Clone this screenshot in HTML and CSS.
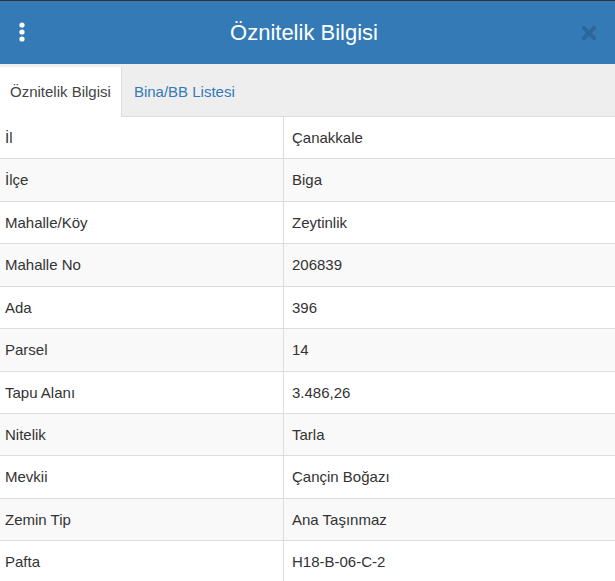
FILE: index.html
```html
<!DOCTYPE html>
<html lang="tr">
<head>
    <meta charset="UTF-8">
    <meta name="viewport" content="width=device-width, initial-scale=1.0">
    <title>Öznitelik Bilgisi</title>
    <link rel="stylesheet" href="styles.css">
</head>
<body>
    <div class="panel">
        <div class="panel-header">
            <span class="menu-btn">
                <svg width="8" height="20" viewBox="0 0 8 20">
                    <circle cx="4" cy="3" r="2.6" fill="#fff"/>
                    <circle cx="4" cy="10" r="2.6" fill="#fff"/>
                    <circle cx="4" cy="17" r="2.6" fill="#fff"/>
                </svg>
            </span>
            <h1 class="panel-title">Öznitelik Bilgisi</h1>
            <span class="close-btn">
                <svg width="14" height="14" viewBox="0 0 14 14">
                    <path d="M2 2 L12 12 M12 2 L2 12" stroke="#2b679e" stroke-width="4" stroke-linecap="round"/>
                </svg>
            </span>
        </div>

        <ul class="nav-tabs">
            <li class="tab active"><a href="#oznitelik">Öznitelik Bilgisi</a></li>
            <li class="tab"><a href="#bina">Bina/BB Listesi</a></li>
        </ul>

        <table class="info-table">
            <tbody>
                <tr><td>İl</td><td>Çanakkale</td></tr>
                <tr><td>İlçe</td><td>Biga</td></tr>
                <tr><td>Mahalle/Köy</td><td>Zeytinlik</td></tr>
                <tr><td>Mahalle No</td><td>206839</td></tr>
                <tr><td>Ada</td><td>396</td></tr>
                <tr><td>Parsel</td><td>14</td></tr>
                <tr><td>Tapu Alanı</td><td>3.486,26</td></tr>
                <tr><td>Nitelik</td><td>Tarla</td></tr>
                <tr><td>Mevkii</td><td>Çançin Boğazı</td></tr>
                <tr><td>Zemin Tip</td><td>Ana Taşınmaz</td></tr>
                <tr><td>Pafta</td><td>H18-B-06-C-2</td></tr>
            </tbody>
        </table>
    </div>
</body>
</html>
```

FILE: styles.css
```css
body,
html {
    margin: 0;
    padding: 0;
    font-family: "Liberation Sans", Arial, sans-serif;
    font-size: 15px;
    color: #333;
    background-color: white;
}

.panel {
    border-top: 1px solid #333;
}

.panel-header {
    height: 63px;
    background-color: #337ab7;
    display: flex;
    align-items: center;
    justify-content: space-between;
    padding: 0 18px 0 18px;
}

.menu-btn {
    width: 8px;
    display: flex;
    margin-top: -2px;
}

.panel-title {
    margin: 0;
    font-size: 22px;
    font-weight: normal;
    color: white;
}

.close-btn {
    display: flex;
    margin-right: 1px;
}

.nav-tabs {
    list-style: none;
    margin: 0;
    padding: 3px 0 0 0;
    display: flex;
    background-color: #eee;
    border-bottom: 1px solid #ddd;
}

.tab {
    margin-right: 2px;
    margin-bottom: -1px;
}

.tab a {
    display: block;
    padding: 14px 10px 15px 10px;
    line-height: 21px;
    text-decoration: none;
    color: #337ab7;
    border-right: 1px solid transparent;
}

.tab.active a {
    background-color: white;
    color: #444;
    border-right: 1px solid #ddd;
}

.info-table {
    width: 100%;
    border-collapse: collapse;
}

.info-table td {
    padding: 10px 5px;
    line-height: 1.42857;
    border-top: 1px solid #ddd;
    vertical-align: top;
}

.info-table td:first-child {
    width: 273px;
    border-right: 1px solid #ddd;
}

.info-table td:last-child {
    padding-left: 8px;
}

.info-table tr:first-child td {
    border-top: none;
}

.info-table tr:nth-child(even) {
    background-color: #f9f9f9;
}
```
